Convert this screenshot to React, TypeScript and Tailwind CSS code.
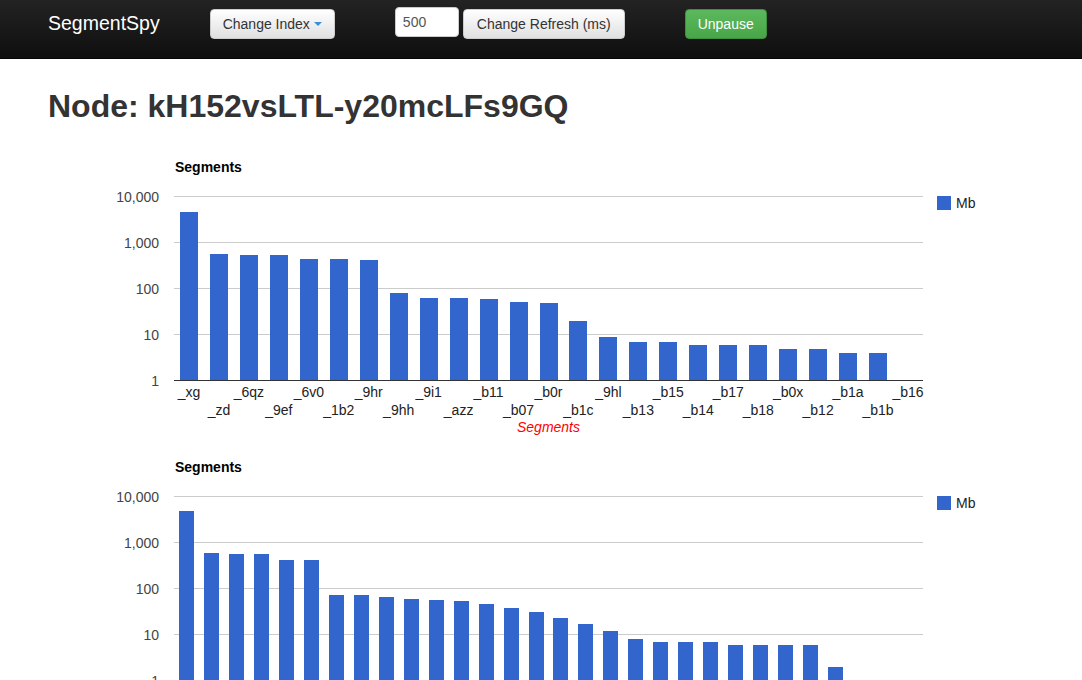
import React from 'react';

// Google-charts style log bar chart, drawn by hand
const BAR_COLOR = '#3366cc';
const PLOT_LEFT = 174;
const PLOT_RIGHT = 923;
const DECADE = 46; // px per power of ten
const BASE_Y = 230; // baseline inside the svg

interface Segment {
  name: string;
  mb: number;
}

const nodeSegments: Segment[] = [
  { name: '_xg', mb: 4490 },
  { name: '_zd', mb: 548 },
  { name: '_6qz', mb: 522 },
  { name: '_9ef', mb: 522 },
  { name: '_6v0', mb: 427 },
  { name: '_1b2', mb: 427 },
  { name: '_9hr', mb: 406 },
  { name: '_9hh', mb: 78 },
  { name: '_9i1', mb: 61 },
  { name: '_azz', mb: 61 },
  { name: '_b11', mb: 58 },
  { name: '_b07', mb: 50 },
  { name: '_b0r', mb: 47 },
  { name: '_b1c', mb: 19 },
  { name: '_9hl', mb: 8.6 },
  { name: '_b13', mb: 6.7 },
  { name: '_b15', mb: 6.7 },
  { name: '_b14', mb: 5.8 },
  { name: '_b17', mb: 5.8 },
  { name: '_b18', mb: 5.8 },
  { name: '_b0x', mb: 4.7 },
  { name: '_b12', mb: 4.7 },
  { name: '_b1a', mb: 3.9 },
  { name: '_b1b', mb: 3.9 },
  { name: '_b16', mb: 0.8 },
];

const replicaSegments: Segment[] = [
  { name: '_xg', mb: 4720 },
  { name: '_zd', mb: 576 },
  { name: '_6qz', mb: 548 },
  { name: '_9ef', mb: 548 },
  { name: '_6v0', mb: 406 },
  { name: '_1b2', mb: 406 },
  { name: '_9hr', mb: 70 },
  { name: '_9hh', mb: 70 },
  { name: '_9i1', mb: 64 },
  { name: '_azz', mb: 58 },
  { name: '_b11', mb: 55 },
  { name: '_b07', mb: 52 },
  { name: '_b0r', mb: 45 },
  { name: '_b1c', mb: 37 },
  { name: '_9hl', mb: 30 },
  { name: '_b13', mb: 22 },
  { name: '_b15', mb: 16.5 },
  { name: '_b14', mb: 11.6 },
  { name: '_b17', mb: 7.8 },
  { name: '_b18', mb: 6.7 },
  { name: '_b0x', mb: 6.7 },
  { name: '_b12', mb: 6.7 },
  { name: '_b1a', mb: 5.8 },
  { name: '_b1b', mb: 5.8 },
  { name: '_b16', mb: 5.8 },
  { name: '_b19', mb: 5.8 },
  { name: '_b1d', mb: 1.9 },
  { name: '_b1e', mb: 0.6 },
  { name: '_b1f', mb: 0.5 },
  { name: '_b1g', mb: 0.4 },
];

const ticks = [
  { label: '10,000', y: BASE_Y - DECADE * 4 },
  { label: '1,000', y: BASE_Y - DECADE * 3 },
  { label: '100', y: BASE_Y - DECADE * 2 },
  { label: '10', y: BASE_Y - DECADE },
  { label: '1', y: BASE_Y },
];

function SegmentChart({ data }: { data: Segment[] }) {
  const groupW = (PLOT_RIGHT - PLOT_LEFT) / data.length;
  const barW = Math.floor(groupW * 0.618);
  const center = (PLOT_LEFT + PLOT_RIGHT) / 2;

  return (
    <svg width={1000} height={300} className="block shrink-0">
      <text x={175} y={22} fontSize={14} fontWeight="bold" fill="#000">
        Segments
      </text>

      {/* gridlines */}
      {ticks.slice(0, 4).map((t) => (
        <rect key={t.label} x={PLOT_LEFT} y={t.y} width={PLOT_RIGHT - PLOT_LEFT} height={1} fill="#cccccc" />
      ))}
      {ticks.map((t) => (
        <text key={t.label} x={159} y={t.y + 6} fontSize={14} fill="#444" textAnchor="end">
          {t.label}
        </text>
      ))}

      {/* bars */}
      {data.map((s, i) => {
        const h = Math.round(Math.max(0, Math.log10(s.mb)) * DECADE);
        const x = Math.round(PLOT_LEFT + i * groupW + (groupW - barW) / 2);
        return h > 0 ? <rect key={s.name} x={x} y={BASE_Y - h} width={barW} height={h} fill={BAR_COLOR} /> : null;
      })}
      <rect x={PLOT_LEFT} y={BASE_Y} width={PLOT_RIGHT - PLOT_LEFT} height={1} fill="#333" />

      {/* category labels, staggered on two rows */}
      {data.map((s, i) => (
        <text
          key={s.name}
          x={PLOT_LEFT + (i + 0.5) * groupW}
          y={i % 2 === 0 ? 247 : 265}
          fontSize={14}
          fill="#222"
          textAnchor="middle"
        >
          {s.name}
        </text>
      ))}
      <text x={center} y={282} fontSize={14} fill="#ff0000" fontStyle="italic" textAnchor="middle">
        Segments
      </text>

      {/* legend */}
      <rect x={937} y={46} width={14} height={14} fill={BAR_COLOR} />
      <text x={956} y={58} fontSize={14} fill="#222">
        Mb
      </text>
    </svg>
  );
}

export default function App() {
  return (
    <div className="h-[680px] overflow-hidden bg-white font-['Liberation_Sans',Arial,sans-serif] text-[#333]">
      <nav className="flex h-[59px] items-start border-b border-[#080808] bg-gradient-to-b from-[#232323] to-[#0f0f0f]">
        <span className="ml-[48px] mt-[8px] text-[19.5px] leading-[30px] text-white">SegmentSpy</span>
        <button className="ml-[50px] mt-[9px] flex h-[30px] items-center rounded border border-[#cccccc] bg-gradient-to-b from-white to-[#e0e0e0] px-3 text-[14px] text-[#333] shadow-[0_1px_1px_rgba(0,0,0,0.075)]">
          Change Index
          <span className="ml-1 h-0 w-0 border-x-4 border-t-4 border-x-transparent border-t-[#3a8fd8]" />
        </button>
        <input
          defaultValue="500"
          className="ml-[60px] mt-[7px] h-[30px] w-[64px] rounded border border-[#cccccc] bg-white px-[7px] text-[14px] text-[#555] outline-none"
        />
        <button className="ml-1 mt-[9px] h-[30px] rounded border border-[#cccccc] bg-gradient-to-b from-white to-[#e0e0e0] px-[13px] text-[14px] text-[#333] shadow-[0_1px_1px_rgba(0,0,0,0.075)]">
          Change Refresh (ms)
        </button>
        <button className="ml-[60px] mt-[9px] h-[30px] rounded border border-[#3e8f3e] bg-gradient-to-b from-[#5cb85c] to-[#48a648] px-3 text-[14px] text-white">
          Unpause
        </button>
      </nav>

      <h1 className="ml-[48px] mt-[30px] text-[32px] font-bold leading-[35px] text-[#333]">
        Node: kH152vsLTL-y20mcLFs9GQ
      </h1>

      <div className="mt-[26px] flex flex-col">
        <SegmentChart data={nodeSegments} />
        <SegmentChart data={replicaSegments} />
      </div>
    </div>
  );
}
